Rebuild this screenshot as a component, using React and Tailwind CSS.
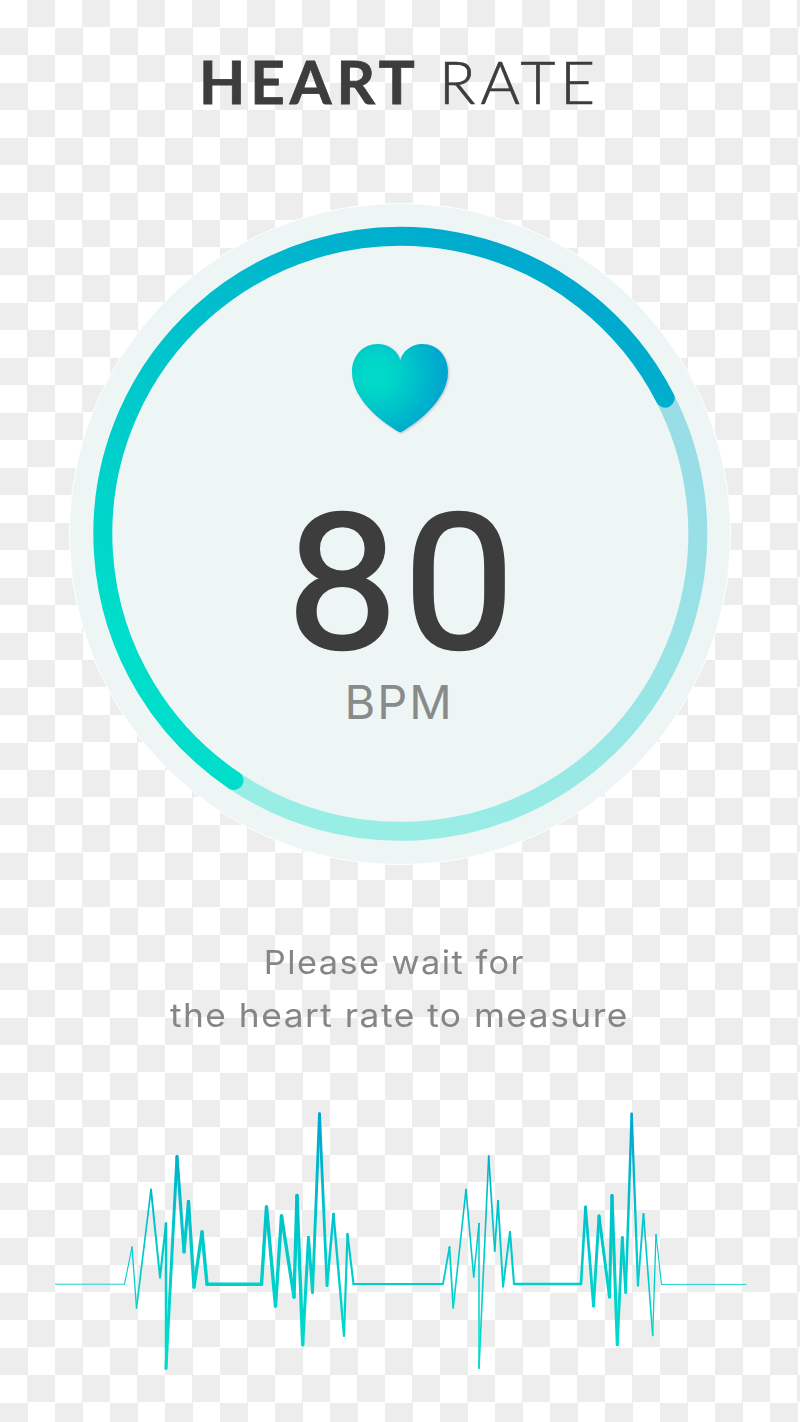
// Trace points of the pulse line: [x, y, stroke width]
const TRACE = [
  [55.5, 172.2, 0.9], [124.5, 172.2, 0.9], [132, 135, 1.1], [136.5, 196, 1.3], [151, 77.5, 1.7],
  [160, 165.5, 2], [166, 111.5, 2.2], [166, 256.5, 2.5], [177, 44.5, 3], [184, 140, 3.1],
  [188.5, 89.5, 3.2], [194, 175, 3.3], [202, 120, 3.3], [207, 172.2, 3.4], [261.5, 172.2, 3.4],
  [266.5, 95, 3.4], [275.5, 194, 3.4], [281.5, 104, 3.4], [294, 185, 3.4], [297, 83.5, 3.4],
  [302.7, 232.7, 3.4], [308.5, 125.5, 3.1], [312.5, 180.5, 3], [319.5, 1.8, 2.9], [327, 173.5, 2.8],
  [333.5, 102, 2.6], [344, 223.7, 2.4], [347.5, 122, 2.2], [353.5, 172, 2.1], [443, 172, 1.9],
  [449.5, 135, 1.8], [453.2, 196, 1.7], [466, 77.5, 1.6], [473.7, 165, 1.6], [479, 111.5, 1.5],
  [479, 256.3, 1.5], [488.7, 44, 1.6], [494.7, 139, 1.7], [498, 89, 1.8], [503, 174.5, 1.9],
  [510, 120, 2], [514, 172, 2.1], [581, 172, 2.3], [585.5, 95, 2.6], [593.5, 194, 2.8],
  [599, 104, 2.9], [609.5, 185, 3], [612, 83.5, 3.1], [617.3, 232.7, 3.1], [622.3, 125.5, 2.8],
  [625.7, 180.5, 2.7], [631.7, 1.8, 2.5], [638, 173.5, 2.3], [643.5, 102, 1.9], [652.7, 223.5, 1.6],
  [656, 122.5, 1.3], [661.5, 172.4, 1.1], [746, 172.4, 0.9],
];

function Heart() {
  return (
    <svg className="h-[96px] w-[104px]" viewBox="0 0 104 96">
      <defs>
        <radialGradient id="heart" gradientUnits="userSpaceOnUse" cx="28" cy="35" r="68">
          <stop offset="0" stopColor="#00dbc8" />
          <stop offset="0.25" stopColor="#00d6c8" />
          <stop offset="1" stopColor="#00a6ce" />
        </radialGradient>
      </defs>
      <path
        className="drop-shadow-[1px_1px_1px_rgba(60,80,130,0.3)]"
        fill="url(#heart)"
        d="M52.300 92.500C38 85 4 61 4 32C4 15.500 15 4 29.500 4C41 4 50.500 11.500 52.300 20.500C54 11.500 63.500 4 74.500 4C89 4 100 15.500 100 32C100 61 66 85 52.300 92.500Z"
      />
    </svg>
  );
}

function Ring() {
  return (
    <svg className="col-start-1 row-start-1 size-full" viewBox="0 0 662 662" fill="none" strokeWidth="19">
      <defs>
        <linearGradient id="ring" gradientUnits="userSpaceOnUse" x1="460" y1="60" x2="180" y2="500">
          <stop offset="0" stopColor="#00aace" />
          <stop offset="1" stopColor="#00ddca" />
        </linearGradient>
      </defs>
      <circle cx="331" cy="331" r="330.5" fill="#eef6f5" stroke="#fff" strokeWidth="1" />
      <path stroke="url(#ring)" strokeOpacity="0.36" d="M596.1 195.2A297.5 297.5 0 0 1 165 577.5" />
      <path stroke="url(#ring)" strokeLinecap="round" d="M165 577.5A297.5 297.5 0 1 1 596.1 195.2" />
    </svg>
  );
}

function Pulse() {
  return (
    <svg className="h-[270px] w-[800px]" viewBox="0 0 800 270" strokeLinecap="round">
      <defs>
        <linearGradient id="pulse" gradientUnits="userSpaceOnUse" x1="0" y1="10" x2="0" y2="235">
          <stop offset="0" stopColor="#00a8ce" />
          <stop offset="0.45" stopColor="#00c5cb" />
          <stop offset="1" stopColor="#00dcca" />
        </linearGradient>
      </defs>
      {TRACE.slice(1).map(([x, y, w], i) => {
        const [px, py] = TRACE[i];
        return <path key={i} d={`M${px} ${py}L${x} ${y}`} stroke="url(#pulse)" strokeWidth={w} />;
      })}
    </svg>
  );
}

export default function App() {
  return (
    <main className="flex h-[1422px] w-[800px] flex-col items-center overflow-hidden bg-[repeating-conic-gradient(#ededed_0_25%,#fff_0_50%)] bg-[length:55px_55px] font-['Inter',sans-serif]">
      <h1 className="flex h-[203px] w-full pt-[45px] pl-[199px] font-['Lato',sans-serif] text-[60px] leading-[72px] whitespace-nowrap text-[#3d3d3d]">
        <span className="w-[240px] font-bold tracking-[5px] [-webkit-text-stroke:0.8px_#3d3d3d]">HEART</span>
        <span className="font-light tracking-[5px] [-webkit-text-stroke:0.7px_#3d3d3d]">RATE</span>
      </h1>

      <section className="grid size-[662px] shrink-0">
        <Ring />
        <div className="col-start-1 row-start-1 flex flex-col items-center pt-[137px]">
          <Heart />
          <div className="mt-[73px] h-[150px] scale-x-[1.05] pl-[6px] font-['Roboto',sans-serif] text-[189px] leading-[150px] font-normal tracking-[5px] text-[#3d3d3d] [-webkit-text-stroke:2.5px_#3d3d3d]">
            80
          </div>
          <div className="mt-[14px] pr-[2px] text-[47px] leading-[58px] tracking-[2px] text-[#898b8b]">BPM</div>
        </div>
      </section>

      <p className="mt-[71px] flex h-[176px] flex-col items-center text-[33px] leading-[53px] whitespace-nowrap text-[#858585]">
        <span className="scale-x-[1.04] pr-[11px] tracking-[1.4px]">Please wait for</span>
        <span className="scale-x-[1.07] pr-[2px] tracking-[1.4px]">the heart rate to measure</span>
      </p>

      <Pulse />
    </main>
  );
}
